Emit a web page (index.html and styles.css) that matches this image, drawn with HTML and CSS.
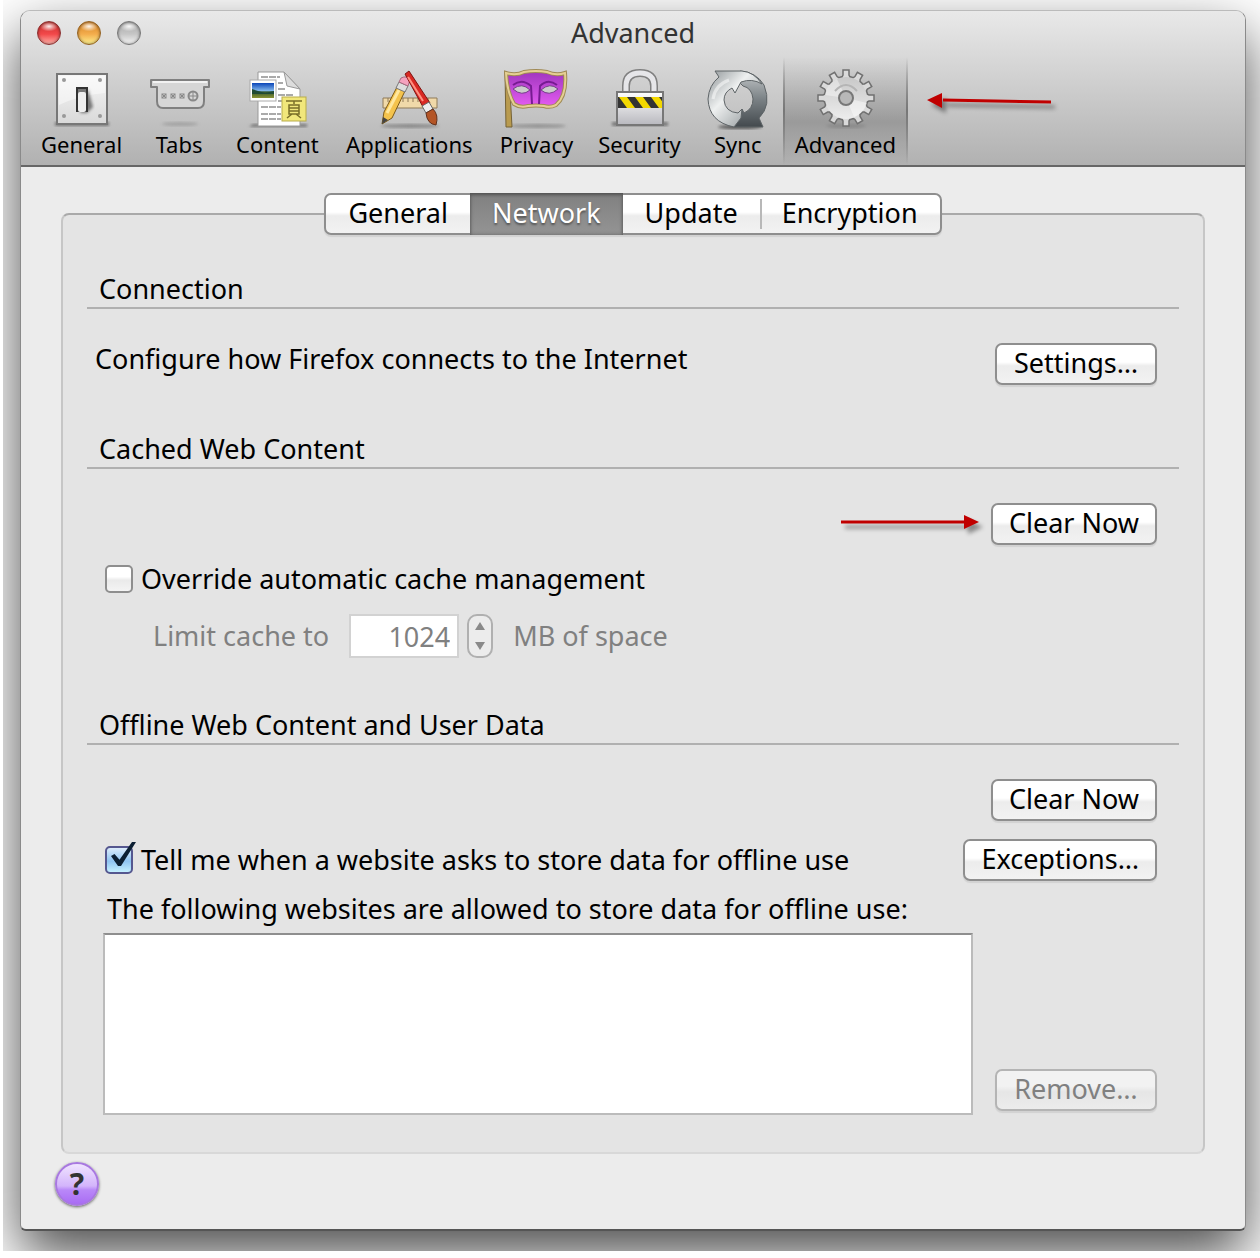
FILE: index.html
```html
<!DOCTYPE html>
<html lang="en">
<head>
    <meta charset="UTF-8">
    <meta name="viewport" content="width=device-width, initial-scale=1.0">
    <title>Advanced</title>
    <link rel="stylesheet" href="styles.css">
</head>
<body>
    <div class="backdrop">
        <div class="window">
            <header class="window-header">
                <div class="titlebar">
                    <div class="lights">
                        <button class="light light-close" aria-label="Close"></button>
                        <button class="light light-minimize" aria-label="Minimize"></button>
                        <button class="light light-zoom" aria-label="Zoom"></button>
                    </div>
                    <h1>Advanced</h1>
                </div>
                <nav class="toolbar">
                    <button class="tool">
                        <svg viewBox="0 0 64 64">
                            <defs>
                                <linearGradient id="plate" x1="0" y1="0" x2="0" y2="1"><stop offset="0" stop-color="#f6f6f6"/><stop offset="1" stop-color="#d9d9d9"/></linearGradient>
                                <filter id="soft"><feGaussianBlur stdDeviation="1.5"/></filter>
                            </defs>
                            <rect x="5" y="55" width="54" height="4" fill="#777" filter="url(#soft)"/>
                            <rect x="7" y="7" width="50" height="50" fill="url(#plate)" stroke="#777" stroke-width="2"/>
                            <path d="M9 9H55V26Q30 28 9 38Z" fill="#fff" opacity=".45"/>
                            <g fill="#999"><circle cx="14" cy="13" r="2"/><circle cx="50" cy="13" r="2"/><circle cx="14" cy="49" r="2"/><circle cx="50" cy="49" r="2"/></g>
                            <path d="M38 22L43 40L37 46L30 46Z" fill="#777" filter="url(#soft)"/>
                            <rect x="27" y="21" width="10" height="23" fill="#777" stroke="#333" stroke-width="2"/>
                            <rect x="28" y="25" width="8" height="20" rx="2" fill="#eee"/>
                        </svg>
                        <span>General</span>
                    </button>
                    <button class="tool">
                        <svg viewBox="0 0 64 64">
                            <ellipse cx="33" cy="57" rx="18" ry="2" fill="#888" opacity=".5" filter="url(#soft)"/>
                            <path d="M4 13H62V20H57V34Q57 41 51 41H16Q10 41 10 34V20H4Z" fill="#d6d6d6" stroke="#808080" stroke-width="2" stroke-linejoin="round"/>
                            <path d="M6 15H60" stroke="#f2f2f2" stroke-width="2"/>
                            <g fill="none" stroke="#888" stroke-width="1"><path d="M15 27l4 4m0-4l-4 4M24 27l4 4m0-4l-4 4M33 27l4 4m0-4l-4 4M42 29h8M46 25v8"/><rect x="15" y="27" width="4" height="4"/><rect x="24" y="27" width="4" height="4"/><rect x="33" y="27" width="4" height="4"/><circle cx="46" cy="29" r="4.500" stroke-width="2"/></g>
                        </svg>
                        <span>Tabs</span>
                    </button>
                    <button class="tool">
                        <svg viewBox="0 0 64 64">
                            <defs><linearGradient id="photo" x1="0" y1="0" x2="0" y2="1"><stop offset="0" stop-color="#0a45b8"/><stop offset=".5" stop-color="#7fb4ea"/><stop offset=".6" stop-color="#33562c"/><stop offset="1" stop-color="#8d9434"/></linearGradient></defs>
                            <path d="M8 57H62V60H4Z" fill="#777" filter="url(#soft)"/>
                            <path d="M13 5H39L55 22V59H13Z" fill="#fff" stroke="#999"/>
                            <path d="M39 5L55 22L42 19Z" fill="#dcdcdc" stroke="#999"/>
                            <path d="M16 10h19M33 16h5M33 22h8M33 28h16M33 34h6M16 40h20M16 47h20M16 52h20" stroke="#aaa" stroke-width="2" stroke-dasharray="7 1"/>
                            <rect x="5" y="13" width="26" height="21" fill="#fff" stroke="#aaa"/>
                            <rect x="7" y="16" width="22" height="15" fill="url(#photo)"/>
                            <path d="M7 22L13 24L20 26L29 24V27H7Z" fill="#204a35"/>
                            <rect x="37" y="30" width="24" height="24" fill="#f1e77b" stroke="#b9ad4b"/>
                            <path d="M41 34H57M49 34V37M44 38H54V47H44ZM44 41H54M44 44H54M47 47L42 51M51 47L56 51" fill="none" stroke="#796f28" stroke-width="1.500"/>
                        </svg>
                        <span>Content</span>
                    </button>
                    <button class="tool tool-wide">
                        <svg viewBox="0 0 64 64">
                            <ellipse cx="33" cy="59" rx="29" ry="2" fill="#666" opacity=".6" filter="url(#soft)"/>
                            <path d="M6 31H60V41H6Z" fill="#f0d9a9" stroke="#8f7b58"/>
                            <path d="M11 31v4m5-4v4m5-4v4m5-4v4m5-4v4m5-4v4m5-4v4m5-4v4m5-4v4" stroke="#8f7b58"/>
                            <path d="M20 20L28 24L15 51L5 57L7 45Z" fill="#f4c34d" stroke="#7c5a19"/>
                            <path d="M22 23L10 46" stroke="#ffe79d" stroke-width="3"/>
                            <path d="M5 57L6 50L11 53Z" fill="#444"/>
                            <path d="M22 15L31 19L28 25L19 21Z" fill="#ddd" stroke="#777"/>
                            <path d="M24 11Q30 8 33 13L31 19L22 15Z" fill="#f5a2be" stroke="#a96a7f"/>
                            <path d="M28 7L32 4L53 36L46 40Z" fill="#d92923" stroke="#7e1512"/>
                            <path d="M31 10L46 34" stroke="#ff9182" stroke-width="2"/>
                            <path d="M45 39L52 35L56 42L49 46Z" fill="#eee" stroke="#666"/>
                            <path d="M49 46L56 42Q62 48 59 58Q50 57 49 46Z" fill="#b45526" stroke="#63301b"/>
                        </svg>
                        <span>Applications</span>
                    </button>
                    <button class="tool">
                        <svg viewBox="0 0 64 64">
                            <defs><linearGradient id="mask" x1="0" y1="0" x2="0" y2="1"><stop offset="0" stop-color="#9f35bd"/><stop offset="1" stop-color="#e45cf2"/></linearGradient></defs>
                            <ellipse cx="34" cy="59" rx="28" ry="2" fill="#777" opacity=".6" filter="url(#soft)"/>
                            <path d="M1 6H5L8 60H2Z" fill="#b99b4f" stroke="#756236"/>
                            <path d="M2 6Q12 9 20 5Q32 3 43 5Q52 9 61 6Q63 29 52 38Q46 41 40 39Q32 38 24 39Q16 41 10 37Q3 25 2 6Z" fill="url(#mask)" stroke="#a08a55" stroke-width="4"/>
                            <path d="M2 6Q12 9 20 5Q32 3 43 5Q52 9 61 6Q63 29 52 38Q46 41 40 39Q32 38 24 39Q16 41 10 37Q3 25 2 6Z" fill="none" stroke="#e5cf93" stroke-width="2"/>
                            <path d="M9 18Q18 11 27 19L28 37M53 18Q44 11 36 19L35 37" fill="none" stroke="#761b91" stroke-width="2"/>
                            <path d="M9 22Q18 15 26 23Q18 30 9 22ZM54 22Q46 15 37 23Q45 30 54 22Z" fill="#ccc" stroke="#76408a"/>
                        </svg>
                        <span>Privacy</span>
                    </button>
                    <button class="tool">
                        <svg viewBox="0 0 64 64">
                            <defs>
                                <linearGradient id="lock" x1="0" y1="0" x2="0" y2="1"><stop offset="0" stop-color="#fff"/><stop offset="1" stop-color="#b8b8be"/></linearGradient>
                                <clipPath id="stripe"><rect x="11" y="30" width="44" height="11"/></clipPath>
                            </defs>
                            <rect x="5" y="55" width="56" height="4" fill="#777" filter="url(#soft)"/>
                            <path d="M19 26V19Q19 6 33 6Q47 6 47 19V26" fill="none" stroke="#808080" stroke-width="8"/>
                            <path d="M19 26V19Q19 6 33 6Q47 6 47 19V26" fill="none" stroke="#e6e6e9" stroke-width="5"/>
                            <rect x="10" y="25" width="46" height="33" fill="url(#lock)" stroke="#777" stroke-width="2"/>
                            <g clip-path="url(#stripe)"><rect x="11" y="30" width="44" height="11" fill="#333"/><path d="M12 30h8l8 11h-8zM28 30h8l8 11h-8zM44 30h8l8 11h-8z" fill="#f3d800"/></g>
                        </svg>
                        <span>Security</span>
                    </button>
                    <button class="tool">
                        <svg viewBox="0 0 64 64">
                            <defs>
                                <linearGradient id="syncA" x1="0" y1="0" x2="1" y2="1"><stop offset="0" stop-color="#8d9396"/><stop offset=".4" stop-color="#eef0f0"/><stop offset="1" stop-color="#80878a"/></linearGradient>
                                <linearGradient id="syncB" x1="0" y1="0" x2="0" y2="1"><stop offset="0" stop-color="#c5c9ca"/><stop offset=".5" stop-color="#7b8286"/><stop offset="1" stop-color="#43494d"/></linearGradient>
                            </defs>
                            <ellipse cx="34" cy="60" rx="22" ry="2" fill="#555" filter="url(#soft)"/>
                            <path d="M34 4Q50 5 58 18Q66 38 53 51L57 60H28L33 46L36 42L38 46Q47 42 47 32Q46 21 37 19L33 15Z" fill="url(#syncB)" stroke="#5e6467"/>
                            <path d="M9 4H36Q48 5 56 17Q46 11 35 15L29 26L26 21Q18 25 18 33Q19 45 32 46L36 42L35 51L28 60Q3 55 2 32Q3 18 13 10Z" fill="url(#syncA)" stroke="#5e6467"/>
                            <path d="M7 32Q9 18 23 13" fill="none" stroke="#fff" stroke-width="3" opacity=".5"/>
                        </svg>
                        <span>Sync</span>
                    </button>
                    <button class="tool tool-active" aria-pressed="true">
                        <svg viewBox="0 0 64 64">
                            <defs>
                                <linearGradient id="gear" x1="0" y1="0" x2="0" y2="1"><stop offset="0" stop-color="#c8c8c8"/><stop offset="1" stop-color="#ececec"/></linearGradient>
                                <path id="tooth" d="M28 12L30 8V3H36V8L38 12Z"/>
                                <g id="teeth"><use href="#tooth"/><use href="#tooth" transform="rotate(30 33 31)"/><use href="#tooth" transform="rotate(60 33 31)"/></g>
                            </defs>
                            <ellipse cx="33" cy="59" rx="20" ry="2" fill="#777" opacity=".5" filter="url(#soft)"/>
                            <circle cx="33" cy="31" r="21" fill="#d5d5d5" stroke="#707070" stroke-width="3"/>
                            <g fill="#dadada" stroke="#707070" stroke-width="1.500"><use href="#teeth"/><use href="#teeth" transform="rotate(90 33 31)"/><use href="#teeth" transform="rotate(180 33 31)"/><use href="#teeth" transform="rotate(270 33 31)"/></g>
                            <circle cx="33" cy="31" r="21" fill="url(#gear)"/>
                            <path d="M33 31L12 28A21 21 0 0 1 24 12ZM33 31L54 36A21 21 0 0 1 41 50Z" fill="#fff" opacity=".4"/>
                            <path d="M22 24Q33 12 44 24" fill="none" stroke="#b5b5b5" stroke-width="2"/>
                            <circle cx="33" cy="31" r="7" fill="#b8b8b8" stroke="#777" stroke-width="2"/>
                        </svg>
                        <span>Advanced</span>
                    </button>
                </nav>
            </header>

            <main class="content">
                <div class="tabs" role="tablist">
                    <button class="tab" role="tab">General</button>
                    <button class="tab tab-active" role="tab" aria-selected="true">Network</button>
                    <button class="tab" role="tab">Update</button>
                    <button class="tab" role="tab">Encryption</button>
                </div>
                <div class="panel">
                    <section class="group">
                        <h2>Connection</h2>
                        <div class="row connection-row">
                            <p>Configure how Firefox connects to the Internet</p>
                            <button class="btn">Settings…</button>
                        </div>
                    </section>

                    <section class="group">
                        <h2>Cached Web Content</h2>
                        <div class="row row-end">
                            <button class="btn">Clear Now</button>
                        </div>
                        <div class="row check-row">
                            <label class="check"><input type="checkbox">Override automatic cache management</label>
                        </div>
                        <div class="row limit-row">
                            <label for="cacheSize">Limit cache to</label>
                            <input type="text" id="cacheSize" class="size-input" value="1024" disabled>
                            <button class="stepper" aria-label="Change cache size" disabled>
                                <svg viewBox="0 0 26 44"><path d="M13 8L18 16H8ZM13 36L18 28H8Z" fill="#8a8a8a"/></svg>
                            </button>
                            <span>MB of space</span>
                        </div>
                    </section>

                    <section class="group">
                        <h2>Offline Web Content and User Data</h2>
                        <div class="row row-end">
                            <button class="btn">Clear Now</button>
                        </div>
                        <div class="row offline-row">
                            <label class="check"><input type="checkbox" checked>Tell me when a website asks to store data for offline use</label>
                            <button class="btn">Exceptions…</button>
                        </div>
                        <label class="list-label" for="siteList">The following websites are allowed to store data for offline use:</label>
                        <div class="row list-row">
                            <select id="siteList" class="site-list" size="6"></select>
                            <button class="btn" disabled>Remove…</button>
                        </div>
                    </section>
                </div>
                <button class="help" aria-label="Help">?</button>
            </main>

            <svg class="arrow arrow-toolbar" viewBox="0 0 134 30">
                <path d="M18 8L126 10" stroke="#c00000" stroke-width="3"/>
                <path d="M2 8L17 1V16Z" fill="#c00000"/>
            </svg>
            <svg class="arrow arrow-clear" viewBox="0 0 150 30">
                <path d="M1 10H126" stroke="#c00000" stroke-width="3"/>
                <path d="M139 10L124 3V17Z" fill="#c00000"/>
            </svg>
        </div>
    </div>
</body>
</html>
```
FILE: styles.css
```css
* {
    box-sizing: border-box;
}

body {
    margin: 0;
    background: #fff;
    font-family: "Noto Sans", "Open Sans", sans-serif;
    font-size: 27px;
    line-height: 36px;
    color: #000;
}

h1, h2, p {
    margin: 0;
    font-size: inherit;
    font-weight: normal;
}

button, input, select {
    font: inherit;
    color: inherit;
    margin: 0;
}

.backdrop {
    margin-left: 3px;
    padding: 10px 14px 20px 17px;
    overflow: hidden;
}

.window {
    position: relative;
    border: 1px solid #8a8a8a;
    border-top-color: #bbb;
    border-bottom: 2px solid #555;
    border-radius: 10px 10px 6px 6px;
    background: #ececec;
    box-shadow: 0 24px 56px rgba(0,0,0,0.7);
}

/* === TITLE BAR AND TOOLBAR === */
.window-header {
    background: linear-gradient(#e9e9e9, #b1b1b1);
    border-bottom: 2px solid #666;
    border-radius: 9px 9px 0 0;
}

.titlebar {
    display: grid;
    grid-template-columns: 1fr auto 1fr;
    align-items: center;
    height: 46px;
    padding: 0 16px 2px;
    color: #333;
}

.lights {
    display: flex;
    gap: 16px;
}

.light {
    width: 24px;
    height: 24px;
    padding: 0;
    border: 1px solid;
    border-radius: 50%;
    box-shadow: inset 0 0 3px rgba(0,0,0,0.5);
}

.light-close {
    border-color: #8c2f2f;
    background: radial-gradient(ellipse 9px 5px at 50% 20%, rgba(255,255,255,0.9), rgba(255,255,255,0)), linear-gradient(#c7322f, #f2484a 55%, #ffb0a8);
}

.light-minimize {
    border-color: #94611f;
    background: radial-gradient(ellipse 9px 5px at 50% 20%, rgba(255,255,255,0.9), rgba(255,255,255,0)), linear-gradient(#d58222, #f3ad4d 55%, #fdf08e);
}

.light-zoom {
    border-color: #777;
    background: radial-gradient(ellipse 9px 5px at 50% 20%, rgba(255,255,255,0.9), rgba(255,255,255,0)), linear-gradient(#a8a8a8, #c6c6c6 55%, #f5f5f5);
}

.toolbar {
    display: flex;
    gap: 1px;
    padding: 0 8px;
}

.tool {
    display: flex;
    flex-direction: column;
    align-items: center;
    padding: 10px 12px 8px;
    border: 0;
    background: none;
    font-size: 22px;
    line-height: 26px;
}

.tool-wide {
    min-width: 155px;
}

.tool svg {
    width: 64px;
    height: 64px;
}

.tool-active {
    background:
        linear-gradient(transparent, #777 50%, transparent) left / 2px 100% no-repeat,
        linear-gradient(transparent, #777 50%, transparent) right / 2px 100% no-repeat,
        linear-gradient(rgba(0,0,0,0), rgba(0,0,0,0.2) 60%, rgba(0,0,0,0));
}

/* === TABS AND PANEL === */
.content {
    padding: 26px 40px 23px;
}

.tabs {
    position: relative;
    display: flex;
    width: max-content;
    margin: 0 auto -22px;
    border: 2px solid #8e8e8e;
    border-radius: 7px;
    background: linear-gradient(#fff 45%, #ececec 55%, #f2f2f2);
    box-shadow: 0 2px 1px rgba(0,0,0,0.08);
}

.tab {
    height: 38px;
    padding: 0 22px 2px;
    border: 0;
    background: none;
}

.tab:last-child {
    background: linear-gradient(#b8b8b8, #b8b8b8) left center / 2px 30px no-repeat;
}

.tab-active {
    height: 42px;
    margin: -2px 0;
    background: linear-gradient(#808080, #949494);
    box-shadow: inset 0 2px 3px #555, inset 0 0 4px #666;
    color: #fff;
    text-shadow: 0 2px 2px #555;
}

.panel {
    padding: 56px 24px 37px;
    border: 2px solid #c6c6c6;
    border-top-color: #a9a9a9;
    border-bottom-color: #d8d8d8;
    border-radius: 8px;
    background: #e4e4e4;
}

.group h2 {
    padding: 0 12px;
    border-bottom: 2px solid #b0b0b0;
}

.row {
    display: flex;
    align-items: center;
    justify-content: space-between;
    padding: 0 22px 0 18px;
}

.row-end {
    justify-content: flex-end;
    padding-top: 34px;
}

.connection-row {
    align-items: flex-start;
    padding: 34px 22px 46px 8px;
    line-height: 32px;
}

.btn {
    min-width: 162px;
    height: 42px;
    padding: 0 16px 2px;
    border: 2px solid #8e8e8e;
    border-radius: 7px;
    background: linear-gradient(#fff 45%, #ececec 55%, #f2f2f2);
    box-shadow: 0 2px 1px rgba(0,0,0,0.08);
    line-height: 34px;
}

.btn:disabled {
    border-color: #b4b4b4;
    background: linear-gradient(#f2f2f2 40%, #e6e6e6 55%, #ececec);
    color: #808080;
}

.check {
    display: flex;
    align-items: center;
    gap: 8px;
}

.check input {
    appearance: none;
    width: 28px;
    height: 28px;
    border: 2px solid #8e8e8e;
    border-radius: 5px;
    background: linear-gradient(#fff 40%, #eaeaea 55%, #f4f4f4);
}

.check input:checked {
    position: relative;
    border-color: #55578f;
    background: linear-gradient(#dcecfb, #8fc4f2 55%, #c4f0ff);
}

.check input:checked::after {
    content: "";
    position: absolute;
    left: 4px;
    top: -6px;
    width: 25px;
    height: 24px;
    background: #0c1f33;
    clip-path: polygon(0 58%, 14% 50%, 34% 74%, 84% 0, 100% 0, 40% 100%, 28% 100%);
}

.check-row {
    padding-top: 16px;
}

.limit-row {
    justify-content: flex-start;
    padding: 17px 0 49px 66px;
    color: #808080;
}

.size-input {
    width: 110px;
    height: 44px;
    margin: 0 8px 0 20px;
    padding: 0 7px;
    border: 2px solid #d2d2d2;
    background: #fff;
    text-align: right;
}

.stepper {
    width: 26px;
    height: 44px;
    margin-right: 20px;
    padding: 0;
    border: 2px solid #b0b0b0;
    border-radius: 10px;
    background: #ececec;
}

.stepper svg {
    display: block;
    width: 26px;
    height: 44px;
    margin: -2px;
}

.offline-row {
    padding-top: 18px;
}

.list-label {
    display: block;
    padding: 10px 20px 6px;
}

.list-row {
    align-items: flex-end;
    gap: 22px;
    padding-left: 16px;
}

.site-list {
    flex: 1;
    height: 182px;
    border: 2px solid #bbb;
    border-top-color: #8e8e8e;
    border-radius: 0;
    background: #fff;
}

.list-row .btn {
    margin-bottom: 4px;
}

.help {
    display: block;
    width: 44px;
    height: 44px;
    margin: 8px 0 0 -6px;
    padding: 0;
    border: 2px solid #a878e0;
    border-radius: 50%;
    background: linear-gradient(#f0e4ff, #d3b4fb 55%, #b988f8 65%, #a96cf4);
    box-shadow: 0 1px 3px rgba(0,0,0,0.6);
    font-size: 30px;
    font-weight: bold;
    color: #333;
}

/* === POINTER ARROWS === */
.arrow {
    position: absolute;
    filter: drop-shadow(4px 5px 2px rgba(0,0,0,0.4));
}

.arrow-toolbar {
    left: 904px;
    top: 81px;
    width: 134px;
}

.arrow-clear {
    right: 255px;
    top: 501px;
    width: 150px;
}
```
